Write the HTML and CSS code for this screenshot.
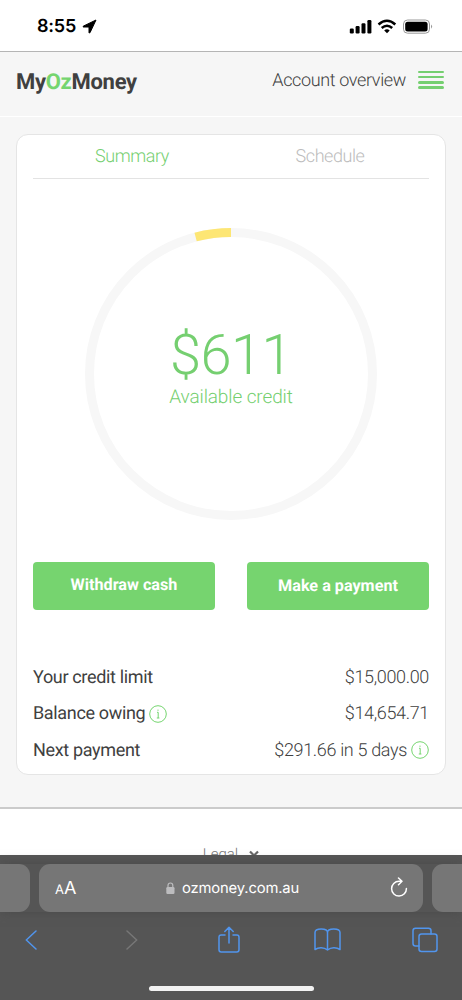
FILE: index.html
```html
<!DOCTYPE html>
<html lang="en">
<head>
<meta charset="utf-8">
<meta name="viewport" content="width=device-width, initial-scale=1">
<title>MyOzMoney</title>
<link rel="stylesheet" href="styles.css">
</head>
<body>
<div class="status">
  <div class="clock"><span>8:55</span>
    <svg width="15" height="15" viewBox="0 0 15 15"><path d="M14 1 1.2 7.2Q.7 7.8 1.4 8H7V13.6Q7.3 14.4 8 13.7Z" fill="#000" stroke="#000" stroke-linejoin="round"/></svg>
  </div>
  <svg class="signals" width="84" height="16" viewBox="0 0 84 16">
    <rect x="0.8" y="9.5" width="4" height="5" rx="1.2"/><rect x="6.6" y="7" width="4" height="7.5" rx="1.2"/><rect x="12.5" y="4.2" width="4" height="10.3" rx="1.2"/><rect x="18.4" y="1" width="4" height="13.5" rx="1.2"/>
    <g fill="none" stroke="#000" stroke-width="2.5"><path d="M29.5 5.5Q38-1.9 46.3 5.5"/><path d="M32.7 9Q38 4.4 43.2 9"/></g><path d="M35.2 11.5Q38 9.1 40.7 11.5L38 14.3Z"/>
    <rect x="54.5" y="1" width="26" height="13.2" rx="4" fill="none" stroke="#999" stroke-width="1"/><rect x="56.2" y="2.8" width="22.4" height="9.6" rx="2.5"/><path d="M82 5.4Q84.2 7.6 82 9.8Z" fill="#999"/>
  </svg>
</div>
<header class="header">
  <div class="brand">My<span>Oz</span>Money</div>
  <div class="page-name">Account overview</div>
  <div class="menu"><i></i><i></i><i></i><i></i></div>
</header>
<main class="main">
  <section class="card">
    <nav class="tabs"><span class="tab active">Summary</span><span class="tab">Schedule</span></nav>
    <div class="gauge">
      <svg class="ring" width="292" height="292" viewBox="0 0 292 292" fill="none" stroke-width="9">
        <circle cx="146" cy="146" r="141.5" stroke="#f7f7f7"/>
        <path d="M146 4.5A141.5 141.5 0 0 0 110.6 9" stroke="#fde674"/>
      </svg>
      <div class="gauge-text"><div class="amount">$611</div><div class="caption">Available credit</div></div>
    </div>
    <div class="buttons"><div class="button">Withdraw cash</div><div class="button pay">Make a payment</div></div>
    <div class="rows">
      <div class="row"><span class="label">Your credit limit</span><span class="value">$15,000.00</span></div>
      <div class="row"><span class="label">Balance owing</span><svg class="info" width="18" height="18" viewBox="0 0 18 18"><circle cx="9" cy="9" r="8.3"/><path d="M8 7.3H9.2V13M7.8 13H10.4M9 4.6V5.8"/></svg><span class="value">$14,654.71</span></div>
      <div class="row"><span class="label">Next payment</span><span class="value days">$291.66 in 5 days</span><svg class="info" width="18" height="18" viewBox="0 0 18 18"><circle cx="9" cy="9" r="8.3"/><path d="M8 7.3H9.2V13M7.8 13H10.4M9 4.6V5.8"/></svg></div>
    </div>
  </section>
</main>
<footer class="legal"><span>Legal</span><svg width="10" height="8" viewBox="0 0 10 8" fill="none" stroke="#666" stroke-width="2.2"><path d="M1 1.5 5 5.5 9 1.5"/></svg></footer>
<div class="browser">
  <div class="address-row">
    <div class="side-page left"></div>
    <div class="address">
      <span class="aa"><small>A</small>A</span>
      <span class="domain"><svg width="9" height="13" viewBox="0 0 9 13"><rect x="0.3" y="5" width="8.2" height="7" rx="1.2" fill="#bcbcbe"/><path d="M2 5.5V3.5Q2 1 4.4 1T6.8 3.5V5.5" fill="none" stroke="#bcbcbe" stroke-width="1.2"/></svg>ozmoney.com.au</span>
      <svg class="reload" width="18" height="20" viewBox="0 0 18 20" fill="none" stroke="#fff" stroke-width="1.5" stroke-linecap="round" stroke-linejoin="round"><path d="M11.5 4.3H9A7.4 7.4 0 1 0 16.4 11.5M8.5 1 12 4.3 8.5 7.8"/></svg>
    </div>
    <div class="side-page right"></div>
  </div>
  <div class="tools">
    <svg width="12" height="20" viewBox="0 0 12 20"><path d="M11 1 1.3 10 11 19"/></svg>
    <svg class="off" width="12" height="20" viewBox="0 0 12 20"><path d="M1 1 10.7 10 1 19"/></svg>
    <svg width="22" height="28" viewBox="0 0 22 28"><path d="M7 9H3.2Q1 9 1 11.2V23.8Q1 26 3.2 26H18.8Q21 26 21 23.8V11.2Q21 9 18.8 9H15M11 17V1.5M6.8 5.5 11 1.3 15.2 5.5"/></svg>
    <svg width="27" height="24" viewBox="0 0 27 24"><path d="M13.5 4.5C13.5-.2 1-.2 1 4.5V21.5C4.5 19.2 10 19.2 13.5 22 17 19.2 22.5 19.2 26 21.5V4.5C26-.2 13.5-.2 13.5 4.5V22"/></svg>
    <svg width="26" height="26" viewBox="0 0 26 26"><rect x="7" y="7" width="18" height="17.6" rx="2.5"/><path d="M7 19H3.5Q1 19 1 16.5V3.8Q1 1.3 3.5 1.3H16.5Q19 1.3 19 3.8V7"/></svg>
  </div>
  <div class="home"></div>
</div>
</body>
</html>
```
FILE: styles.css
```css
* { box-sizing: border-box; }
body { margin: 0; width: 462px; height: 1000px; overflow: hidden; font-family: Roboto, "Liberation Sans", sans-serif; color: #404040; background: #fff; text-rendering: geometricPrecision; }
svg { display: block; flex: none; }
.status { height: 52px; border-bottom: 1px solid #b5b5b5; display: flex; justify-content: space-between; padding: 15px 29px 0 37px; }
.clock { display: flex; gap: 6px; font: 600 18px/23px Inter, sans-serif; color: #000; letter-spacing: -.2px; }
.clock svg { margin-top: 4px; }
.signals { margin-top: 4px; }
.header { height: 65px; background: #f6f6f6; border-bottom: 1px solid #fff; display: flex; padding: 0 18px 0 16px; align-items: flex-start; }
.brand { font-weight: 700; font-size: 22px; line-height: 28px; margin-top: 17px; letter-spacing: -.3px; }
.brand span { color: #75d56f; }
.page-name { margin: 16px 12px 0 auto; font-size: 18px; line-height: 26px; font-weight: 300; letter-spacing: -.36px; }
.menu { display: grid; gap: 2.7px; width: 26px; margin-top: 19px; }
.menu i { height: 2.4px; border-radius: 2px; background: #75cf70; }
.main { height: 692px; background: #f6f6f6; border-bottom: 2px solid #cbcbcb; padding: 17px 16px 0; }
.card { height: 641px; background: #fff; border: 1px solid #e5e5e5; border-radius: 12px; padding: 0 16px; }
.tabs { height: 44px; border-bottom: 1px solid #e3e3e3; display: grid; grid-template-columns: 1fr 1fr; text-align: center; font-size: 18px; line-height: 44px; font-weight: 300; color: #bcbcbc; letter-spacing: -.45px; }
.active { color: #75cf70; }
.gauge { margin: 49px auto 42px; width: 292px; height: 292px; display: grid; }
.ring, .gauge-text { grid-area: 1 / 1; }
.gauge-text { text-align: center; color: #75cf70; font-weight: 300; padding-top: 97px; }
.amount { font-size: 56px; line-height: 60px; letter-spacing: -.6px; }
.caption { font-size: 19px; line-height: 24px; letter-spacing: -.12px; }
.buttons { display: grid; grid-template-columns: 1fr 1fr; gap: 32px; height: 48px; }
.button { background: #76d46f; color: #fff; border-radius: 4px; text-align: center; font-weight: 700; font-size: 16.2px; line-height: 46px; }
.pay { line-height: 48px; }
.rows { padding-top: 49px; }
.row { display: flex; align-items: center; height: 36.6px; font-size: 18px; letter-spacing: -.34px; }
.value { margin-left: auto; font-weight: 300; }
.info { margin-left: 4px; fill: none; stroke: #75d56f; stroke-width: 1; }
.legal { height: 46px; background: #fff; overflow: hidden; display: flex; justify-content: center; gap: 11px; padding-top: 36px; font-size: 15px; line-height: 19px; color: #777; font-weight: 300; }
.legal svg { margin-top: 5px; }
.browser { height: 145px; background: #555; padding-top: 9px; }
.address-row { display: flex; gap: 9px; height: 48px; box-shadow: 0 0 10px #4b4b4b; }
.side-page { width: 30px; background: #767676; }
.left { border-radius: 0 11px 11px 0; }
.right { border-radius: 11px 0 0 11px; }
.address { flex: 1; background: #767676; border-radius: 11px; color: #fff; display: grid; grid-template-columns: 22px 1fr 18px; align-items: center; padding: 0 15px 0 16px; font-family: Inter, sans-serif; }
.aa { font-size: 18px; white-space: nowrap; }
.aa small { font-size: 13px; }
.reload { margin-top: -3px; }
.domain { display: flex; justify-content: center; align-items: center; gap: 7px; font-size: 14.8px; letter-spacing: -.15px; margin-left: -2px; }
.tools { display: grid; grid-template-columns: 101px 92px 96px 98px auto; align-items: center; height: 54px; padding: 1px 0 0 25px; }
.tools svg { fill: none; stroke: #5195ed; stroke-width: 1.5; stroke-linejoin: round; stroke-linecap: round; }
.tools .off { stroke: #777; }
.home { width: 165px; height: 5px; border-radius: 3px; background: #f2f2f2; margin: 20px auto 0; }
```
